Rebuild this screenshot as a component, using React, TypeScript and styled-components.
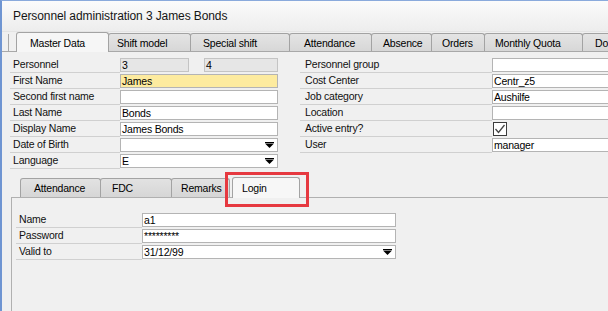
import styled, { createGlobalStyle } from 'styled-components'

const GlobalStyle = createGlobalStyle`
  html, body {
    margin: 0;
    padding: 0;
  }
  body {
    background: #f0f0f0;
    font-family: "Liberation Sans", Arial, sans-serif;
    font-size: 10.5px;
    letter-spacing: -0.2px;
    color: #000;
    overflow: hidden;
  }
`

const Window = styled.div`
  width: 608px;
  height: 311px;
  box-sizing: border-box;
  border-left: 2px solid #6f95d2;
  border-top: 1px solid #8aaadc;
  background: #f0f0f0;
  overflow: hidden;
  display: flex;
  flex-direction: column;
`

const TitleBar = styled.div`
  flex: none;
  height: 30px;
  display: flex;
  align-items: center;
  padding-left: 11px;
  background: linear-gradient(#fbfbfb, #ededed);
  border-bottom: 1px solid #e4e4e4;
  font-size: 12px;
  letter-spacing: -0.1px;
  color: #151515;
`

const TabStrip = styled.div`
  flex: none;
  display: flex;
  align-items: flex-end;
  height: 19px;
  padding-left: 6px;
  border-bottom: 1px solid #a8a8a8;
`

const StripLead = styled.div`
  flex: none;
  width: 9px;
  height: 17px;
  box-sizing: border-box;
  border-left: 1px solid #a8a8a8;
`

const Tab = styled.div<{ $w: number; $active?: boolean; $pad?: number }>`
  flex: none;
  position: relative;
  box-sizing: border-box;
  width: ${p => p.$w}px;
  height: ${p => (p.$active ? 20 : 18)}px;
  margin-bottom: ${p => (p.$active ? -1 : 0)}px;
  margin-left: -1px;
  padding-left: ${p => p.$pad ?? 11}px;
  border: 1px solid #a3a3a3;
  border-bottom: none;
  border-radius: 3px 3px 0 0;
  background: ${p => (p.$active ? '#f6f6f6' : 'linear-gradient(#e4e4e4, #d7d7d7)')};
  z-index: ${p => (p.$active ? 1 : 0)};
  display: flex;
  align-items: center;
  white-space: nowrap;
  overflow: hidden;
  &:first-of-type {
    margin-left: 0;
  }
`

const SubTab = styled(Tab)<{ $gap?: number }>`
  height: ${p => (p.$active ? 21 : 19)}px;
  margin-left: ${p => p.$gap ?? -1}px;
  background: ${p => (p.$active ? '#f7f7f7' : 'linear-gradient(#e2e2e2, #d6d6d6)')};
  overflow: visible;
`

const Highlight = styled.div`
  position: absolute;
  left: -8px;
  top: -6px;
  width: 84px;
  height: 35px;
  box-sizing: border-box;
  border: 3px solid #e63940;
  pointer-events: none;
`

const Form = styled.div`
  flex: none;
  display: grid;
  grid-template-columns: 268px 330px;
  column-gap: 22px;
  padding: 5px 0 0 8px;
`

const Column = styled.div`
  display: flex;
  flex-direction: column;
`

const Row = styled.div<{ $label: number; $field: number }>`
  display: grid;
  grid-template-columns: ${p => p.$label}px ${p => p.$field}px;
  height: 16px;
`

const Label = styled.div<{ $pad?: number }>`
  box-sizing: border-box;
  height: 16px;
  padding-left: ${p => p.$pad ?? 3}px;
  border-bottom: 1px solid #d0d0d0;
  line-height: 15px;
  white-space: nowrap;
  color: #111;
`

const Fields = styled.div`
  display: flex;
  justify-content: space-between;
`

type Tone = 'white' | 'grey' | 'yellow'

const toneBg: Record<Tone, string> = {
  white: '#ffffff',
  grey: '#e6e6e6',
  yellow: '#fdeb9f',
}

const Field = styled.div<{ $tone?: Tone; $w?: number }>`
  box-sizing: border-box;
  width: ${p => (p.$w ? `${p.$w}px` : '100%')};
  height: 14px;
  margin-top: 1px;
  padding: 0 3px 0 1px;
  border: 1px solid ${p => (p.$tone === 'grey' ? '#c4c4c4' : '#b4b4b4')};
  background: ${p => toneBg[p.$tone ?? 'white']};
  display: flex;
  align-items: center;
  justify-content: space-between;
  white-space: nowrap;
  line-height: 12px;
`

const CheckBox = styled.div`
  box-sizing: border-box;
  width: 14px;
  height: 14px;
  margin: 1px 0 0 1px;
  border: 1px solid #3c3c3c;
  background: #fff;
  display: flex;
  align-items: center;
  justify-content: center;
`

const SubSection = styled.div`
  flex: 1;
  display: flex;
  flex-direction: column;
  margin: 8px 0 0 9px;
`

const SubStrip = styled.div`
  flex: none;
  display: flex;
  align-items: flex-end;
  height: 20px;
  padding-left: 9px;
  border-bottom: 1px solid #b0b0b0;
`

const SubPanel = styled.div`
  flex: 1;
  border-left: 1px solid #b0b0b0;
  padding: 14px 0 0 4px;
  display: flex;
  flex-direction: column;
`

const Arrow = () => (
  <svg width="9" height="6" viewBox="0 0 9 6">
    <rect x="0" y="0" width="9" height="1" fill="#000" />
    <polygon points="0,1.5 9,1.5 4.5,6" fill="#000" />
  </svg>
)

const Check = () => (
  <svg width="12" height="12" viewBox="0 0 12 12">
    <polyline points="1.5,6 4.5,9.5 10.5,2" fill="none" stroke="#444" strokeWidth="1.3" />
  </svg>
)

const mainTabs: [string, number, number][] = [
  ['Shift model', 83, 8],
  ['Special shift', 100, 12],
  ['Attendance', 83, 14],
  ['Absence', 61, 11],
  ['Orders', 54, 10],
  ['Monthly Quota', 99, 10],
  ['Documents', 80, 12],
]

export default function App() {
  return (
    <>
      <GlobalStyle />
      <Window>
        <TitleBar>Personnel administration 3 James Bonds</TitleBar>

        <TabStrip>
          <StripLead />
          <Tab $w={93} $active $pad={13}>Master Data</Tab>
          {mainTabs.map(([name, w, pad]) => (
            <Tab key={name} $w={w} $pad={pad}>{name}</Tab>
          ))}
        </TabStrip>

        <Form>
          <Column>
            <Row $label={110} $field={158}>
              <Label>Personnel</Label>
              <Fields>
                <Field $tone="grey" $w={69}>3</Field>
                <Field $tone="grey" $w={74}>4</Field>
              </Fields>
            </Row>
            <Row $label={110} $field={158}>
              <Label>First Name</Label>
              <Field $tone="yellow">James</Field>
            </Row>
            <Row $label={110} $field={158}>
              <Label>Second first name</Label>
              <Field />
            </Row>
            <Row $label={110} $field={158}>
              <Label>Last Name</Label>
              <Field>Bonds</Field>
            </Row>
            <Row $label={110} $field={158}>
              <Label>Display Name</Label>
              <Field>James Bonds</Field>
            </Row>
            <Row $label={110} $field={158}>
              <Label>Date of Birth</Label>
              <Field>
                <span />
                <Arrow />
              </Field>
            </Row>
            <Row $label={110} $field={158}>
              <Label>Language</Label>
              <Field>
                <span>E</span>
                <Arrow />
              </Field>
            </Row>
          </Column>

          <Column>
            <Row $label={192} $field={138}>
              <Label $pad={5}>Personnel group</Label>
              <Field />
            </Row>
            <Row $label={192} $field={138}>
              <Label $pad={5}>Cost Center</Label>
              <Field>Centr_z5</Field>
            </Row>
            <Row $label={192} $field={138}>
              <Label $pad={5}>Job category</Label>
              <Field>Aushilfe</Field>
            </Row>
            <Row $label={192} $field={138}>
              <Label $pad={5}>Location</Label>
              <Field />
            </Row>
            <Row $label={192} $field={138}>
              <Label $pad={5}>Active entry?</Label>
              <CheckBox>
                <Check />
              </CheckBox>
            </Row>
            <Row $label={192} $field={138}>
              <Label $pad={5}>User</Label>
              <Field>manager</Field>
            </Row>
          </Column>
        </Form>

        <SubSection>
          <SubStrip>
            <SubTab $w={81} $pad={13}>Attendance</SubTab>
            <SubTab $w={72} $pad={11}>FDC</SubTab>
            <SubTab $w={59} $pad={9}>Remarks</SubTab>
            <SubTab $w={68} $pad={9} $active $gap={2}>
              Login
              <Highlight />
            </SubTab>
          </SubStrip>
          <SubPanel>
            <Row $label={126} $field={254}>
              <Label>Name</Label>
              <Field>a1</Field>
            </Row>
            <Row $label={126} $field={254}>
              <Label>Password</Label>
              <Field>*********</Field>
            </Row>
            <Row $label={126} $field={254}>
              <Label>Valid to</Label>
              <Field>
                <span>31/12/99</span>
                <Arrow />
              </Field>
            </Row>
          </SubPanel>
        </SubSection>
      </Window>
    </>
  )
}
